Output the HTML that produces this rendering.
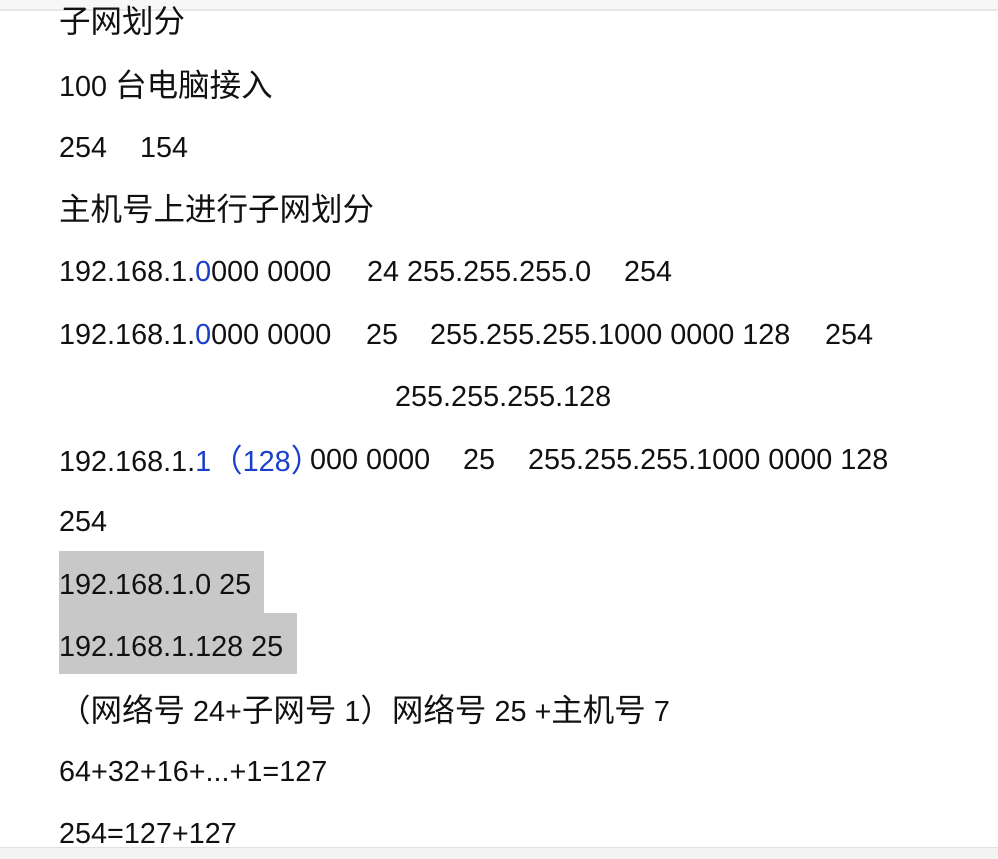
<!DOCTYPE html>
<html><head><meta charset="utf-8"><style>
html,body{margin:0;padding:0;background:#fff;width:998px;height:859px;overflow:hidden;position:relative}
.t{position:absolute;white-space:pre;font-family:"Liberation Sans","Noto Sans CJK SC",sans-serif;font-size:28.8px;color:#111;line-height:34px}
.c{font-size:31.5px}
.b{color:#1a3fc8}
.hl{position:absolute;background:#c8c8c8}
</style></head><body>
<div style="position:absolute;left:0;top:0;width:998px;height:9px;background:#f7f7f7;border-bottom:2px solid #e8e8e8"></div>
<div style="position:absolute;left:0;top:847px;width:998px;height:12px;background:#f3f3f3;border-top:1px solid #e0e0e0"></div>
<div class="hl" style="left:59px;top:551px;width:205px;height:62px"></div>
<div class="hl" style="left:59px;top:613px;width:238px;height:61px"></div>
<div class="t c" style="left:59px;top:4px">子网划分</div>
<div class="t" style="left:59px;top:68px">100 <span class="c">台电脑接入</span></div>
<div class="t" style="left:59px;top:131px">254</div><div class="t" style="left:140px;top:131px">154</div>
<div class="t c" style="left:59px;top:192px">主机号上进行子网划分</div>
<div class="t" style="left:59px;top:255px">192.168.1.<span class="b">0</span>000 0000</div><div class="t" style="left:367px;top:255px">24 255.255.255.0</div><div class="t" style="left:624px;top:255px">254</div>
<div class="t" style="left:59px;top:318px">192.168.1.<span class="b">0</span>000 0000</div><div class="t" style="left:366px;top:318px">25</div><div class="t" style="left:430px;top:318px">255.255.255.1000 0000 128</div><div class="t" style="left:825px;top:318px">254</div>
<div class="t" style="left:395px;top:380px">255.255.255.128</div>
<div class="t" style="left:59px;top:443px">192.168.1.<span class="b">1<span class="c">（</span>128<span class="c">）</span></span></div><div class="t" style="left:310px;top:443px">000 0000</div><div class="t" style="left:463px;top:443px">25</div><div class="t" style="left:528px;top:443px">255.255.255.1000 0000 128</div>
<div class="t" style="left:59px;top:505px">254</div>
<div class="t" style="left:59px;top:568px">192.168.1.0 25</div>
<div class="t" style="left:59px;top:630px">192.168.1.128 25</div>
<div class="t" style="left:59px;top:693px"><span class="c">（网络号</span> 24+<span class="c">子网号</span> 1<span class="c">）网络号</span> 25 +<span class="c">主机号</span> 7</div>
<div class="t" style="left:59px;top:755px">64+32+16+...+1=127</div>
<div class="t" style="left:59px;top:817px">254=127+127</div>
</body></html>
